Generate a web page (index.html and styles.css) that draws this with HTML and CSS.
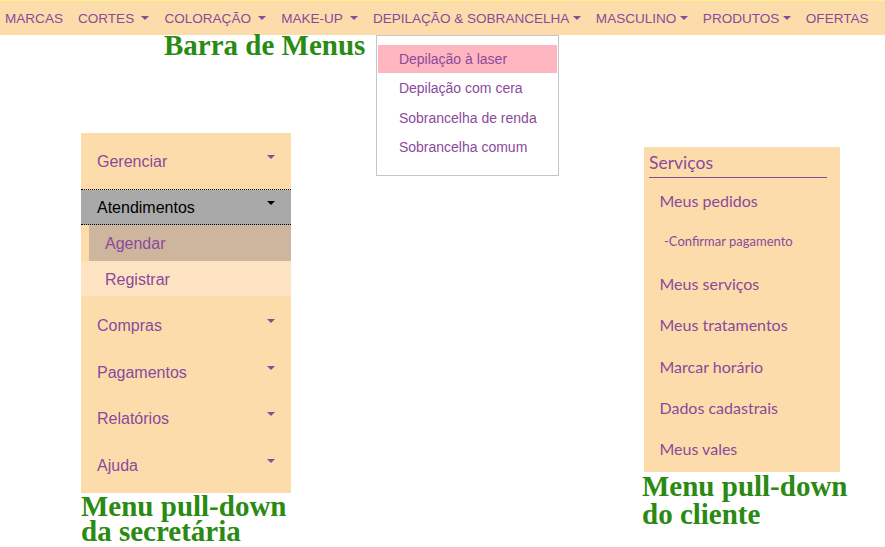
FILE: index.html
```html
<!DOCTYPE html>
<html lang="pt-BR">
<head>
<meta charset="utf-8">
<title>Menus</title>
<link rel="stylesheet" href="styles.css">
</head>
<body>
<nav class="topnav">
  <ul class="nav-list">
    <li class="nav-item">MARCAS</li>
    <li class="nav-item">CORTES <span class="caret"></span></li>
    <li class="nav-item">COLORAÇÃO <span class="caret"></span></li>
    <li class="nav-item">MAKE-UP <span class="caret"></span></li>
    <li class="nav-item nav-open">DEPILAÇÃO &amp; SOBRANCELHA<span class="caret"></span>
      <ul class="dropdown">
        <li class="dd-item dd-active">Depilação à laser</li>
        <li class="dd-item">Depilação com cera</li>
        <li class="dd-item">Sobrancelha de renda</li>
        <li class="dd-item">Sobrancelha comum</li>
      </ul>
    </li>
    <li class="nav-item">MASCULINO<span class="caret"></span></li>
    <li class="nav-item">PRODUTOS<span class="caret"></span></li>
    <li class="nav-item">OFERTAS</li>
  </ul>
</nav>

<div class="label label-top">Barra de Menus</div>

<main class="stage">
  <section class="sec-col">
    <ul class="sec-menu">
      <li class="sec-row"><span class="sec-text">Gerenciar</span><span class="sec-caret"></span></li>
      <li class="sec-group">
        <div class="sec-row sec-row-open"><span class="sec-text">Atendimentos</span><span class="sec-caret"></span></div>
        <ul class="sec-sub">
          <li class="sub-item sub-hover">Agendar</li>
          <li class="sub-item">Registrar</li>
        </ul>
      </li>
      <li class="sec-row"><span class="sec-text">Compras</span><span class="sec-caret"></span></li>
      <li class="sec-row"><span class="sec-text">Pagamentos</span><span class="sec-caret"></span></li>
      <li class="sec-row"><span class="sec-text">Relatórios</span><span class="sec-caret"></span></li>
      <li class="sec-row"><span class="sec-text">Ajuda</span><span class="sec-caret"></span></li>
    </ul>
    <div class="label label-sec">Menu pull-down<br>da secretária</div>
  </section>

  <section class="cli-col">
    <div class="cli-menu">
      <div class="cli-head">Serviços</div>
      <ul class="cli-list">
        <li class="cli-item">Meus pedidos</li>
        <li class="cli-item cli-sub">-Confirmar pagamento</li>
        <li class="cli-item">Meus serviços</li>
        <li class="cli-item">Meus tratamentos</li>
        <li class="cli-item">Marcar horário</li>
        <li class="cli-item">Dados cadastrais</li>
        <li class="cli-item">Meus vales</li>
      </ul>
    </div>
    <div class="label label-cli">Menu pull-down<br>do cliente</div>
  </section>
</main>
</body>
</html>
```

FILE: styles.css
```css
* { box-sizing: border-box; }

html, body {
  margin: 0;
  padding: 0;
  background: #ffffff;
}

body {
  font-family: "Liberation Sans", Arial, sans-serif;
  color: #8a4a9c;
  overflow: hidden;
}

ul {
  list-style: none;
  margin: 0;
  padding: 0;
}

/* ---------- top navigation ---------- */
.topnav {
  background: #fddcab;
  border-top: 1px solid #fff08a;
  padding-top: 2px;
  height: 35px;
}

.nav-list {
  display: flex;
  gap: 15px;
  padding-left: 5px;
  font-size: 13.56px;
  line-height: 32px;
  white-space: nowrap;
}

.nav-item {
  position: relative;
}

.caret {
  display: inline-block;
  width: 0;
  height: 0;
  margin-left: 0.255em;
  vertical-align: 0.255em;
  border-top: 0.3em solid currentColor;
  border-left: 0.3em solid transparent;
  border-right: 0.3em solid transparent;
}

.dropdown {
  position: absolute;
  top: 100%;
  left: 3px;
  width: 183px;
  background: #ffffff;
  border: 1px solid #c6c6c6;
  padding: 9px 1px 13px;
  font-size: 14px;
  z-index: 5;
}

.dd-item {
  height: 28px;
  line-height: 28px;
  margin-bottom: 1.33px;
  padding-left: 21px;
}

.dd-active {
  background: #ffb6c1;
}

/* ---------- labels ---------- */
.label {
  font-family: "Liberation Serif", Georgia, serif;
  font-weight: bold;
  font-size: 29px;
  color: #2a8a12;
  white-space: nowrap;
}

.label-top {
  padding-left: 164px;
  line-height: 20px;
  height: 20px;
}

.label-sec {
  line-height: 25px;
  margin-top: 0.5px;
}

.label-cli {
  line-height: 27.5px;
  margin-top: 1.5px;
  margin-left: -2px;
}

/* ---------- stage ---------- */
.stage {
  display: flex;
  align-items: flex-start;
}

/* secretary menu */
.sec-col {
  width: 210px;
  margin-left: 81px;
  margin-top: 78px;
}

.sec-menu {
  background: #fddcab;
  padding: 5px 0 5px;
  font-size: 16px;
}

.sec-row {
  display: flex;
  justify-content: space-between;
  align-items: center;
  height: 46.5px;
  padding: 0 16px;
}

.sec-text {
  padding-top: 2px;
}

.sec-caret {
  width: 0;
  height: 0;
  border-top: 4.8px solid currentColor;
  border-left: 4.8px solid transparent;
  border-right: 4.8px solid transparent;
  margin-bottom: 7.6px;
}

.sec-group {
  margin: 4.5px 0 6px;
  border-top: 1px dotted #000000;
}

.sec-row-open {
  height: 35px;
  background: #a9a9a9;
  color: #000000;
  border-bottom: 1px dotted #000000;
}

.sub-item {
  height: 35.5px;
  line-height: 35.5px;
  padding-top: 1px;
  padding-left: 24px;
  background: #fee3c2;
}

.sub-hover {
  margin-left: 8px;
  padding-left: 16px;
  background: #ceb59d;
}

/* client menu */
.cli-col {
  margin-left: 353px;
  margin-top: 92px;
}

.cli-menu {
  width: 196px;
  background: #fddcab;
  padding-bottom: 2px;
  font-family: Lato, "Open Sans", sans-serif;
}

.cli-head {
  margin: 0 13px 0 5px;
  padding-top: 2px;
  line-height: 28px;
  font-size: 17.5px;
  border-bottom: 1px solid #8a4a9c;
}

.cli-list {
  margin-top: 2px;
}

.cli-item {
  height: 41.4px;
  line-height: 41.4px;
  padding-left: 15.5px;
  font-size: 16px;
}

.cli-sub {
  padding-left: 20px;
  font-size: 13px;
}
```
